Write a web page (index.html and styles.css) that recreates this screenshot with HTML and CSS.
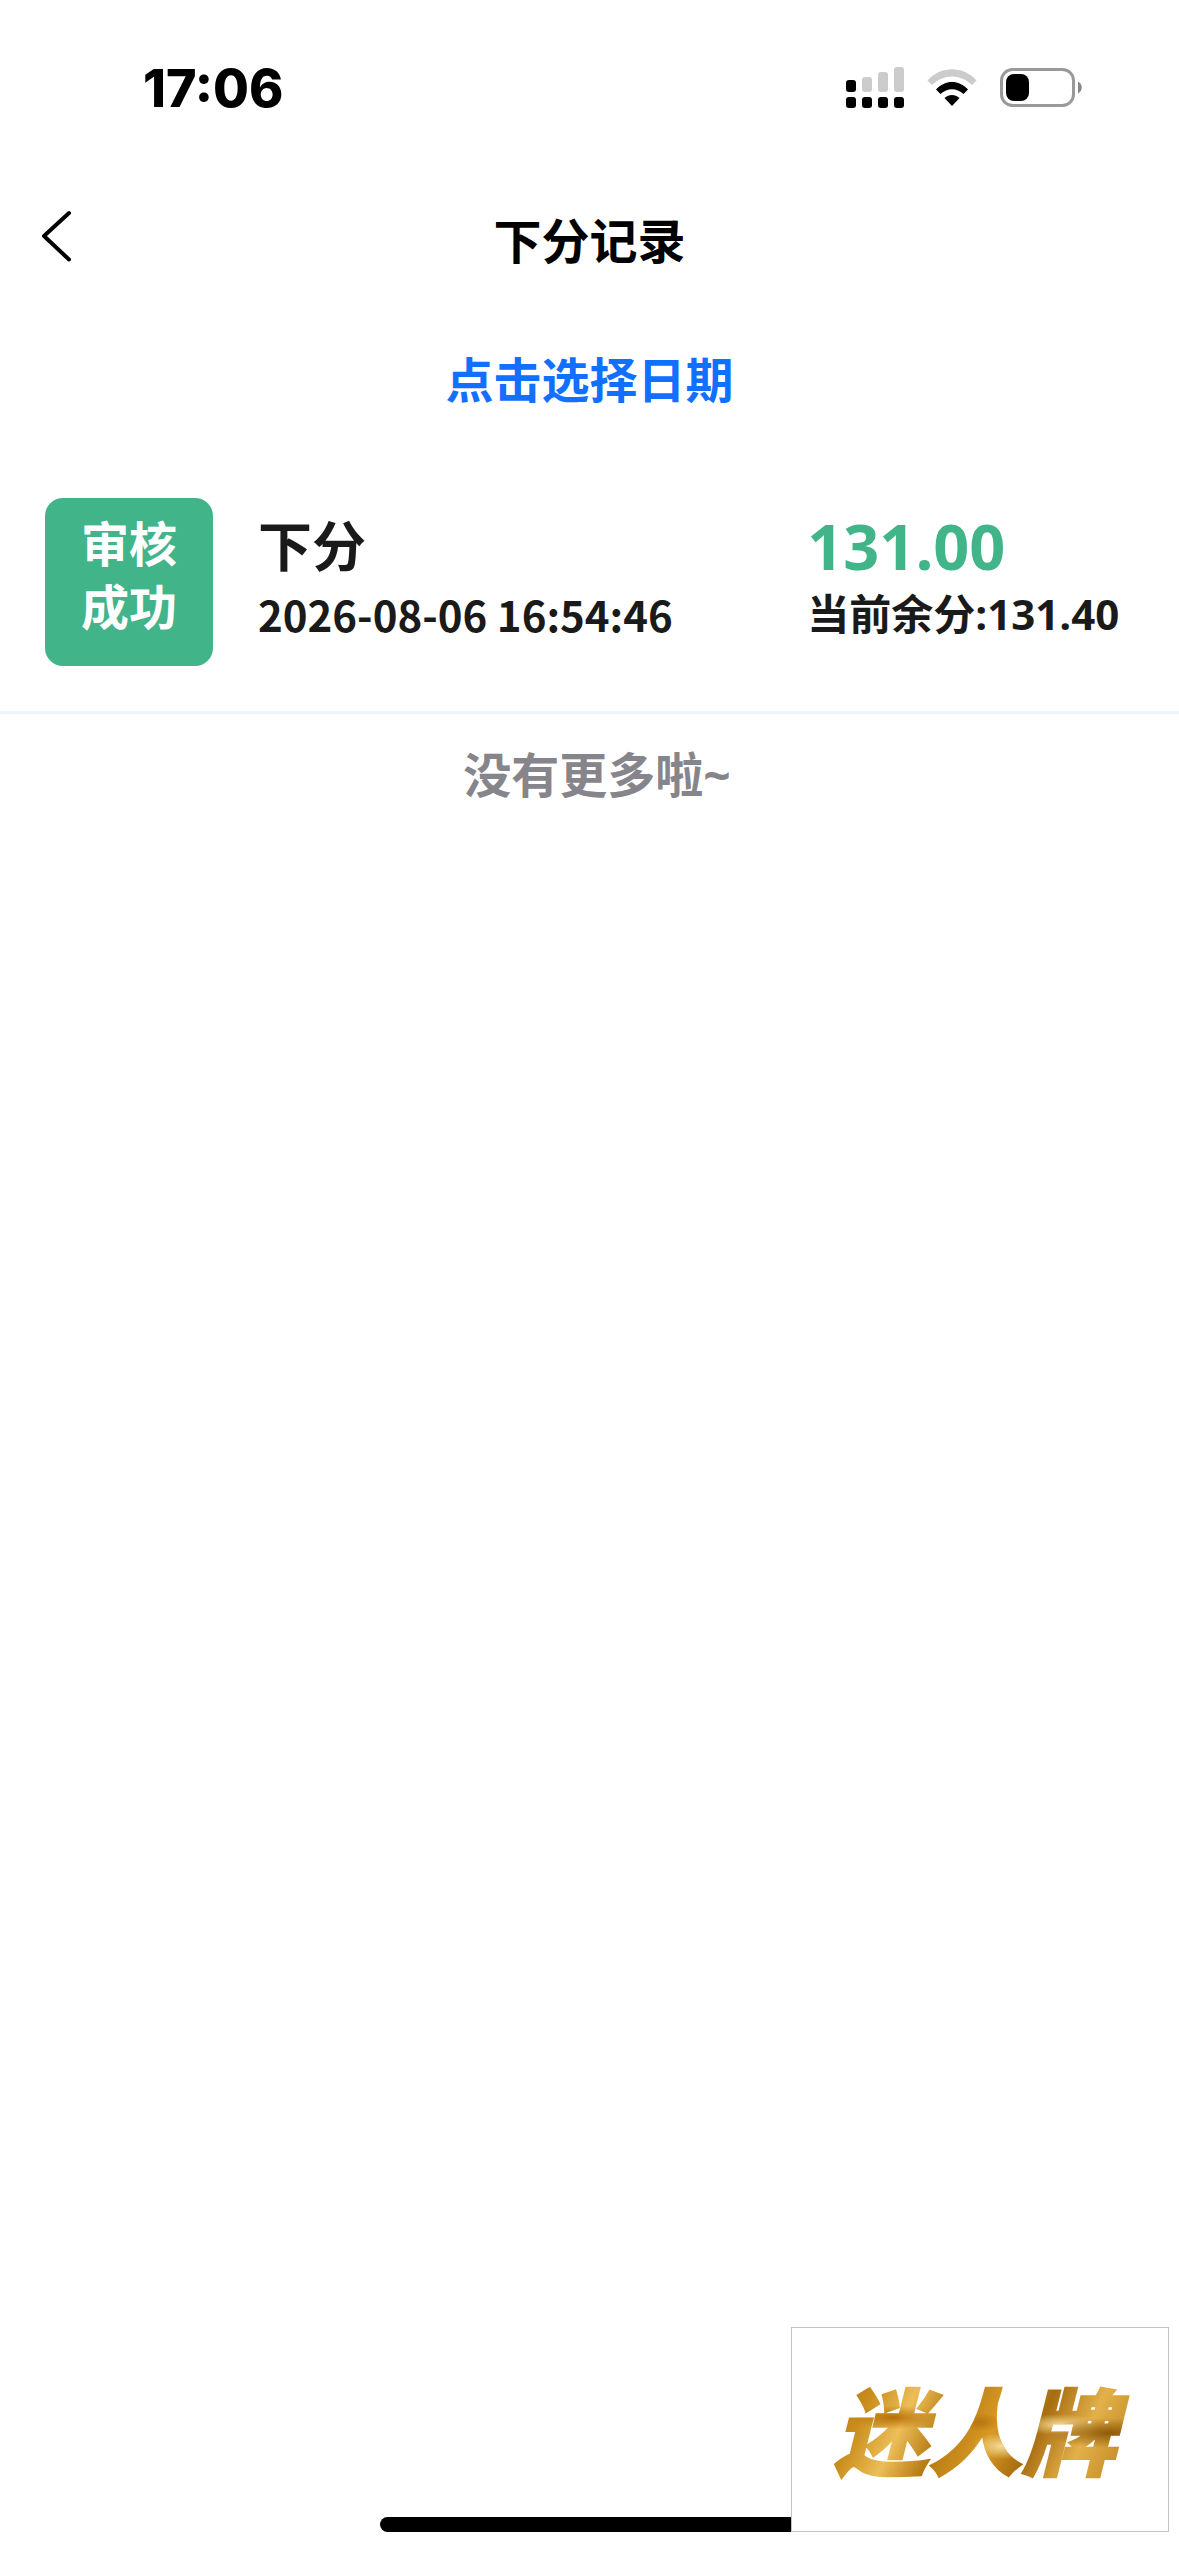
FILE: index.html
```html
<!DOCTYPE html>
<html lang="zh-CN">
<head>
    <meta charset="UTF-8">
    <meta name="viewport" content="width=device-width, initial-scale=1.0">
    <title>下分记录</title>
    <link rel="stylesheet" href="styles.css">
</head>
<body>
<div class="app">
    <div class="status-bar">
        <span class="status-time">17:06</span>
        <div class="status-icons">
            <svg width="58" height="42" viewBox="0 0 58 42" aria-hidden="true">
                <g fill="#ccc">
                    <rect x="16" y="10" width="10" height="15" rx="3"/>
                    <rect x="32" y="5" width="10" height="20" rx="3"/>
                    <rect x="48" y="0" width="10" height="25" rx="3"/>
                </g>
                <rect x="0" y="13" width="10" height="12" rx="3"/>
                <rect x="0" y="30" width="10" height="11" rx="3"/>
                <rect x="16" y="30" width="10" height="11" rx="3"/>
                <rect x="32" y="30" width="10" height="11" rx="3"/>
                <rect x="48" y="30" width="10" height="11" rx="3"/>
            </svg>
            <svg width="50" height="38" viewBox="0 0 50 38" aria-hidden="true">
                <path d="M0.5 11.5C14 -3.5 36 -3.5 49.5 11.5L45 16C33 4.500 17 4.500 5 16Z" fill="#ccc"/>
                <path d="M9 20.500C18 10.500 32 10.500 41 20.500L36.500 25C29.500 18.500 20.500 18.500 13.500 25Z"/>
                <path d="M17.500 29C22 25 28 25 32.500 29L25 37Z"/>
            </svg>
            <svg width="82" height="40" viewBox="0 0 82 40" aria-hidden="true">
                <rect x="1.500" y="1.500" width="72" height="36" rx="11" fill="none" stroke="#999" stroke-width="3"/>
                <rect x="6" y="6" width="23" height="27" rx="8"/>
                <path d="M78 13.500C83 16 83 23 78 25.500Z" fill="#888"/>
            </svg>
        </div>
    </div>

    <header class="nav">
        <button type="button" class="back-button" aria-label="返回">
            <svg width="30" height="52" viewBox="0 0 30 52" aria-hidden="true">
                <path d="M27 3L2 26L27 49.500" fill="none" stroke="#000" stroke-width="4" stroke-linecap="round" stroke-linejoin="round"/>
            </svg>
        </button>
        <h1>下分记录</h1>
    </header>

    <main>
        <button type="button" class="date-button">点击选择日期</button>

        <ul class="record-list">
            <li class="record">
                <div class="record-status">审核<br>成功</div>
                <div class="record-info">
                    <div class="record-type">下分</div>
                    <time class="record-text">2026-08-06 16:54:46</time>
                </div>
                <div class="record-sum">
                    <div class="record-amount">131.00</div>
                    <div class="record-text">当前余分:131.40</div>
                </div>
            </li>
        </ul>

        <p class="no-more">没有更多啦~</p>
    </main>
</div>

<div class="home-indicator"></div>
<div class="logo"><span>迷人牌</span></div>
</body>
</html>
```
FILE: styles.css
```css
:root {
    --success: #42b48a;
    --link: #126fff;
    --text: #1a1a1a;
    --muted: #85858b;
    --line: #ebf4ff;
}

* {
    box-sizing: border-box;
}

body {
    font-family: 'Open Sans', 'Noto Sans CJK SC', sans-serif;
    font-weight: bold;
    margin: 0;
    background: #fff;
    color: var(--text);
}

button {
    border: none;
    background: none;
    padding: 0;
    font: inherit;
    cursor: pointer;
}

.status-bar {
    display: flex;
    justify-content: space-between;
    align-items: center;
    height: 176px;
    padding: 0 97px 0 143px;
}

.status-time {
    font-family: Inter, sans-serif;
    font-size: 52px;
    font-weight: 800;
    color: #000;
}

.status-icons {
    display: flex;
    align-items: center;
    gap: 23px;
}

.nav {
    display: grid;
    grid-template-columns: 120px 1fr 120px;
    align-items: center;
    height: 130px;
}

.back-button {
    display: flex;
    align-items: center;
    height: 120px;
    padding-left: 42px;
    align-self: start;
}

.nav h1 {
    margin: 0;
    font-size: 48px;
    line-height: 64px;
    text-align: center;
    color: #000;
}

.date-button {
    display: block;
    width: 100%;
    height: 147px;
    padding-bottom: 6px;
    font-size: 48px;
    color: var(--link);
}

.record-list {
    list-style: none;
    margin: 0;
    padding: 0;
}

.record {
    display: flex;
    gap: 45px;
    padding: 45px;
    border-bottom: 3px solid var(--line);
}

.record-status {
    width: 168px;
    height: 168px;
    padding-top: 14px;
    border-radius: 18px;
    background: var(--success);
    color: #fff;
    font-size: 48px;
    line-height: 63px;
    text-align: center;
}

.record-info {
    flex: 1;
    padding-top: 12px;
}

.record-sum {
    flex: 0 0 30%;
    padding-top: 12px;
    white-space: nowrap;
}

.record-type {
    font-size: 54px;
    line-height: 72px;
}

.record-amount {
    font-size: 63px;
    line-height: 72px;
    color: var(--success);
}

.record-text {
    display: block;
    font-size: 42px;
    line-height: 63px;
}

time.record-text {
    font-family: 'Noto Sans CJK SC', sans-serif;
}

.no-more {
    margin: 0;
    padding: 29px 0 30px 15px;
    font-size: 48px;
    line-height: 64px;
    text-align: center;
    color: var(--muted);
}

.home-indicator {
    position: fixed;
    bottom: 24px;
    left: 50%;
    width: 420px;
    height: 15px;
    margin-left: -210px;
    border-radius: 8px;
    background: #000;
}

.logo {
    position: fixed;
    right: 10px;
    bottom: 24px;
    display: flex;
    justify-content: center;
    align-items: center;
    width: 378px;
    height: 205px;
    padding-bottom: 6px;
    border: 1px solid #c4c4c4;
    background: #fff;
}

/* gold foil lettering */
.logo span {
    padding: 0 18px 0 8px;
    font-family: 'Noto Sans CJK SC', sans-serif;
    font-size: 94px;
    font-weight: 900;
    font-style: italic;
    line-height: 120px;
    color: transparent;
    -webkit-text-stroke: 2px transparent;
    background:
        radial-gradient(ellipse at 22% 42%, #b86f08 0, transparent 12%),
        radial-gradient(ellipse at 50% 46%, #b87510 0, transparent 10%),
        radial-gradient(ellipse at 92% 55%, #8f5a0a 0, transparent 16%),
        radial-gradient(ellipse at 57% 66%, #f7dc98 0, transparent 12%),
        radial-gradient(ellipse at 76% 48%, #f5d88e 0, transparent 12%),
        linear-gradient(115deg, #a8700f 0%, #c98d1c 16%, #edbe58 28%, #b57a12 40%, #d99a24 54%, #a66c10 66%, #e3b04a 80%, #b57c16 100%);
    -webkit-background-clip: text;
    background-clip: text;
}
```
